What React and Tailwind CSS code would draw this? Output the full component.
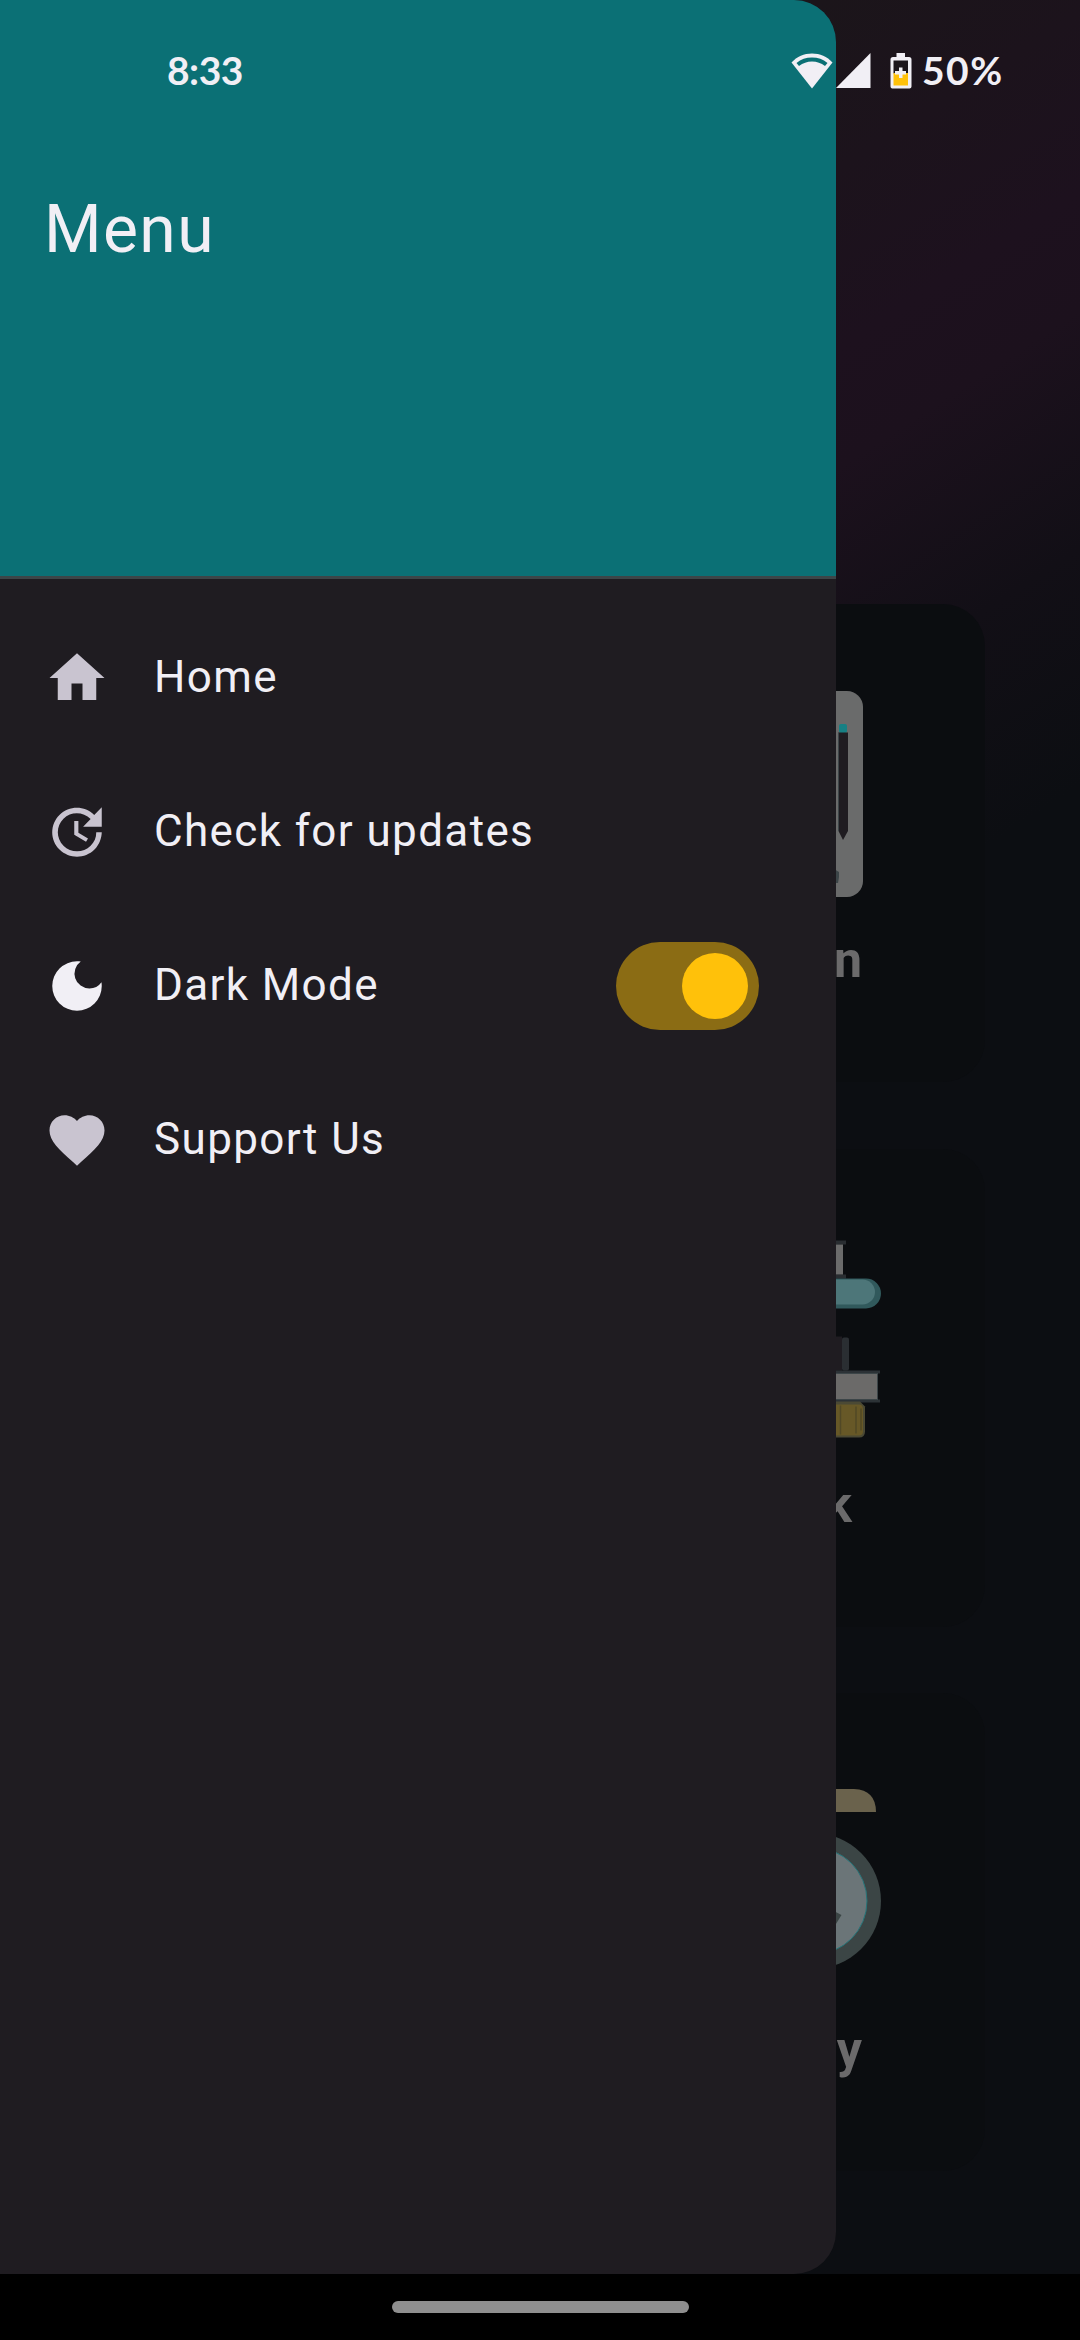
import React from "react";
import { MdHome, MdUpdate, MdDarkMode, MdFavorite } from "react-icons/md";

function StatusBar() {
  return (
    <div className="absolute inset-x-0 top-0 flex h-[141px] items-center pl-[167px] pr-[77px] font-['Lato'] text-[#f1eff5]">
      <span className="text-[39px] font-bold leading-none tracking-[-0.500px]">8:33</span>
      <div className="ml-auto flex items-center">
        <svg className="h-[36px] w-[42px]" viewBox="0 0 42 36">
          <path d="M21 35.5 0.5 9.5C6 3.5 13 0.5 21 0.5s15 3 20.5 9z" fill="#f1eff5" />
          <path d="M5.500 10C10 6.300 15 4.500 21 4.500s11 1.800 15.500 5.500l-2.500 3C30 10 26 8.500 21 8.500S12 10 8 13z" fill="#0b7075" />
        </svg>
        <svg className="ml-[3px] h-[35px] w-[35px]" viewBox="0 0 35 35">
          <path d="M34.500 0v35H0z" fill="#f1eff5" />
        </svg>
        <svg className="ml-[19px] h-[36px] w-[22px]" viewBox="0 0 22 36">
          <path d="M6.500 0h8.500v4H19a2.500 2.500 0 0 1 2.500 2.500v27A2 2 0 0 1 19.500 35.500h-17.500A2 2 0 0 1 0.500 33.500v-27A2.500 2.500 0 0 1 3 4h3.500z" fill="#f1eff5" />
          <path d="M3.500 7.500h14.500v13h-14.500z" fill="#1b151b" />
          <path d="M3.500 20h14.500v12.500h-14.500z" fill="#ffc10a" />
          <path d="M9 14.500h3.500v3.500H16v3.500h-3.500V25H9v-3.500H5V18h4z" fill="#f1eff5" />
        </svg>
        <span className="ml-[10px] w-[81px] whitespace-nowrap text-[39px] font-bold leading-none tracking-[1.500px]">50%</span>
      </div>
    </div>
  );
}

function Card({ viewBox, letter, letterClass, children }) {
  return (
    <div className="h-[478px] w-[434px] overflow-hidden rounded-[42px] bg-[#0b0d10]">
      <svg className="block h-[310px] w-full" viewBox={viewBox}>{children}</svg>
      <p className={letterClass}>{letter}</p>
    </div>
  );
}

function Tools() {
  return (
    <div className="flex flex-col items-end gap-[66.500px] pr-[95px] pt-[604px]">
      <Card viewBox="551 604 434 310" letter="n" letterClass="pr-[123px] pt-[16px] text-right text-[50px] font-bold leading-[60px] text-[#6b6a6b]">
        <rect x="680" y="691" width="183" height="206" rx="16" fill="#6a6b6b" />
        <rect x="839" y="724" width="8" height="9" rx="2" fill="#178084" />
        <path d="M838.500 732.500h9.500V831l-5 9-4.500-9z" fill="#1f1c21" />
        <path d="M838.500 732.500v98.500" stroke="#3c4548" strokeWidth="1" />
        <path d="M834 869l5 3v5l-1 6h-4z" fill="#3c4548" />
      </Card>
      <Card viewBox="551 1148.500 434 310" letter="k" letterClass="pr-[133px] pt-[16px] text-right text-[50px] font-bold leading-[60px] text-[#6b6a6b]">
        <path d="M800 1240h46v4h-46zM800 1274h46v4h-46z" fill="#292d31" />
        <rect x="800" y="1244" width="43" height="30" fill="#6b6b6b" />
        <rect x="780" y="1278" width="101" height="30" rx="15" fill="#31595c" />
        <rect x="780" y="1279" width="95" height="25" rx="12.500" fill="#4d7679" />
        <rect x="800" y="1336" width="42" height="34" fill="#1f1c21" />
        <rect x="842" y="1337" width="7" height="33" rx="2" fill="#2a2e32" />
        <path d="M790 1370h90v3h-90zM790 1399h90v3h-90z" fill="#2c3236" />
        <rect x="790" y="1373" width="87.500" height="26" fill="#6b6a69" stroke="#3c4548" strokeWidth="1" />
        <path d="M800 1401h60l5 5v25q0 6-6 6h-59z" fill="#4b4934" />
        <path d="M800 1404h59q4 0 4 5v22q0 4-4 4h-59z" fill="#675827" />
        <path d="M840.500 1405v29M856 1406v27M861 1408v22" stroke="#514826" strokeWidth="1.500" />
      </Card>
      <Card viewBox="551 1693 434 310" letter="y" letterClass="pr-[123px] pt-[17px] text-right text-[50px] font-bold leading-[60px] text-[#6b6a6b]">
        <path d="M750 1789h104q22 1 22 23H750z" fill="#6a624c" />
        <circle cx="813" cy="1901" r="68" fill="#3b4545" />
        <circle cx="813.500" cy="1901" r="53.500" fill="#6b7578" stroke="#247478" strokeWidth="1" />
        <path d="M830 1909l11.500 6-8 13z" fill="#3b4545" />
      </Card>
    </div>
  );
}

function Row({ Icon, iconClass, label, children }) {
  return (
    <li className="flex h-[154px] items-center pl-[44px] pr-[77px]">
      <Icon className={iconClass} />
      <span className="ml-[44px] pb-[2px] text-[44px] leading-[66px] tracking-[1.375px] text-[#f1eff5]">{label}</span>
      {children}
    </li>
  );
}

function Drawer() {
  return (
    <aside className="absolute left-0 top-0 flex h-[2274px] w-[836px] flex-col overflow-hidden rounded-r-[42px] bg-[#1f1c21]">
      <header className="h-[579px] shrink-0 border-b-[3px] border-[#3c4548] bg-[#0b7075] pl-[44px] pt-[186px]">
        <h1 className="text-[66px] leading-[88px] tracking-[1.375px] text-[#f1eff5]">Menu</h1>
      </header>
      <ul className="pt-[22px]">
        <Row Icon={MdHome} iconClass="size-[66px] text-[#c9c4d0]" label="Home" />
        <Row Icon={MdUpdate} iconClass="size-[66px] text-[#c9c4d0]" label="Check for updates" />
        <Row Icon={MdDarkMode} iconClass="size-[66px] text-[#f1eff5]" label="Dark Mode">
          <button role="switch" aria-checked="true" aria-label="Dark Mode" className="ml-auto flex h-[88px] w-[143px] items-center justify-end rounded-full bg-[#8b6c14] pr-[11px]">
            <span className="size-[66px] rounded-full bg-[#ffc10a]" />
          </button>
        </Row>
        <Row Icon={MdFavorite} iconClass="size-[66px] text-[#c9c4d0]" label="Support Us" />
      </ul>
    </aside>
  );
}

export default function App() {
  return (
    <div className="relative flex h-[2340px] w-[1080px] flex-col overflow-hidden bg-black font-['Roboto',sans-serif]">
      <main className="h-[2274px] shrink-0 bg-[linear-gradient(147deg,#1b151a_18%,#1d111e_30%,#1c111d_34%,#120f16_42%,#0c0e12_50%)]">
        <Tools />
      </main>
      <nav className="flex h-[66px] items-center justify-center">
        <div className="h-[12px] w-[297px] rounded-full bg-[#8f8f8f]" />
      </nav>
      <Drawer />
      <StatusBar />
    </div>
  );
}
